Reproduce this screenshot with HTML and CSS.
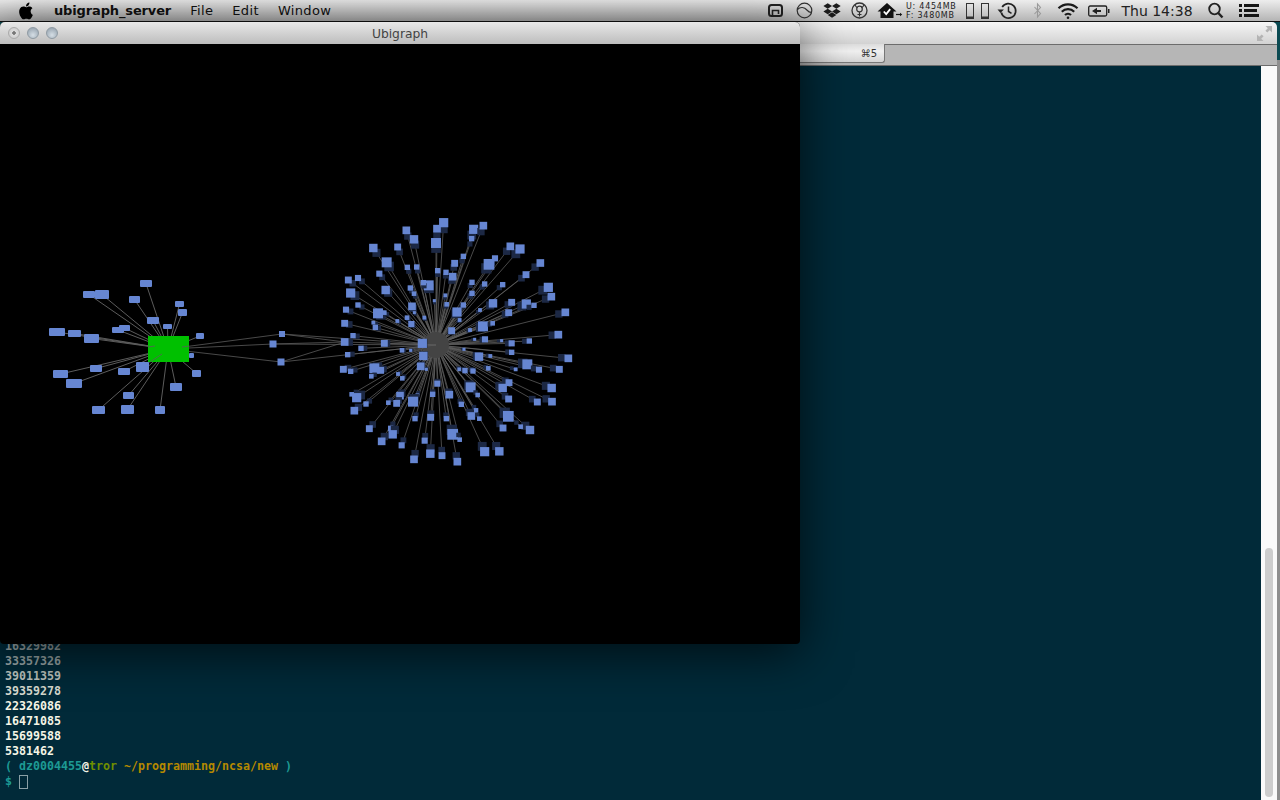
FILE: index.html
```html
<!DOCTYPE html>
<html lang="en">
<head>
    <meta charset="UTF-8">
    <title>Ubigraph</title>
    <link rel="stylesheet" href="styles.css">
</head>
<body>

    <!-- Menu bar -->
    <header class="menubar">
        <svg class="apple" width="17" height="18" viewBox="2 1 20 22"><path d="M17.05 12.54c-.03-2.6 2.13-3.85 2.22-3.91-1.21-1.77-3.09-2.01-3.76-2.04-1.6-.16-3.12.94-3.93.94-.81 0-2.06-.92-3.39-.89-1.74.03-3.35 1.01-4.25 2.57-1.81 3.14-.46 7.8 1.3 10.35.86 1.25 1.89 2.65 3.24 2.6 1.3-.05 1.79-.84 3.36-.84 1.57 0 2.01.84 3.39.81 1.4-.02 2.28-1.27 3.14-2.53.99-1.45 1.4-2.85 1.42-2.92-.03-.01-2.72-1.04-2.75-4.14zM14.47 4.9c.72-.87 1.2-2.08 1.07-3.28-1.03.04-2.28.69-3.02 1.55-.66.77-1.24 2-1.09 3.18 1.15.09 2.32-.58 3.04-1.45z"/></svg>
        <nav class="menus">
            <span class="app-name">ubigraph_server</span>
            <span>File</span>
            <span>Edit</span>
            <span>Window</span>
        </nav>

        <div class="status">
            <!-- remote -->
            <svg width="30" height="21" viewBox="0 0 30 21"><rect x="9" y="5" width="13" height="11" rx="2.5" fill="none" stroke="#222" stroke-width="2"/><path d="M12.5 16v-5.500h6V14" fill="none" stroke="#222" stroke-width="1.600"/></svg>
            <!-- circle with arc -->
            <svg width="30" height="21" viewBox="0 0 30 21"><circle cx="14.5" cy="10.5" r="7.3" fill="none" stroke="#333" stroke-width="1.2"/><path d="M7.4 9.5c3-3 7-2.500 9.500.5 1.500 1.700 3 2.500 4.500 2.400" fill="none" stroke="#333" stroke-width="1.2"/></svg>
            <!-- dropbox -->
            <svg width="25" height="21" viewBox="0 0 25 21"><path transform="translate(3.400 1.900) scale(.72)" fill="#1c1c1c" d="M6 1.800 0 5.600l6 3.800 6-3.800zM18 1.800l-6 3.800 6 3.800 6-3.800zM0 13.200l6 3.800 6-3.800-6-3.800zM18 9.400l-6 3.800 6 3.800 6-3.800zM6 18.300l6 3.800 6-3.800-6-3.800z"/></svg>
            <!-- ring -->
            <svg width="27" height="21" viewBox="0 0 27 21" fill="none" stroke="#333"><circle cx="14.500" cy="10.500" r="7.500" stroke-width="1.300"/><circle cx="14.500" cy="9" r="2.800" stroke-width="1.200"/><path d="M14.500 12v4.500M12.500 14.500h4M10 5c1 2 2 2.500 2.500 2.800M19 5c-1 2-2 2.500-2.500 2.800" stroke-width="1.100"/></svg>
            <!-- house with check -->
            <svg width="32" height="21" viewBox="0 0 32 21"><path d="M15 3 5.500 11.500h3V18h13v-6.500h3z" fill="#111"/><path d="M11.800 11.500l2.400 2.600 4-5" fill="none" stroke="#fff" stroke-width="1.800"/><path d="M24 14.500h5" stroke="#111" stroke-width="1.200"/><path d="M28 12.800l2.200 1.700-2.200 1.700z" fill="#111"/></svg>

            <div class="memory">
                <span>U: 4454MB</span>
                <span>F: 3480MB</span>
            </div>

            <!-- two meters -->
            <svg width="32" height="21" viewBox="0 0 32 21" fill="none" stroke="#333"><rect x="6.500" y="3.500" width="7" height="15"/><rect x="21.500" y="3.500" width="7" height="15"/><path d="M6.500 17.500h7M21.500 17.500h7" stroke-width="2"/></svg>
            <!-- time machine -->
            <svg width="32" height="21" viewBox="0 0 32 21" fill="none" stroke="#222"><path d="M10.200 7a7.300 7.300 0 1 1-.9 5.500" stroke-width="1.700"/><path d="M5.500 9.500l3 3.500 3.400-3.500z" fill="#222" stroke="none"/><path d="M16.500 6.500v5l3 1.800" stroke-width="1.500"/></svg>
            <!-- bluetooth -->
            <svg width="28" height="21" viewBox="0 0 28 21" fill="none" stroke="#999"><path d="M10.500 7l6 6.500-3 3.500V4l3 3.500-6 6.500" stroke-width="1.100"/></svg>
            <!-- wifi -->
            <svg width="32" height="21" viewBox="0 0 32 21" fill="none" stroke="#1a1a1a" stroke-width="2.200"><path d="M6.500 8.300a13.500 13.500 0 0 1 19 0"/><path d="M9.800 11.700a8.800 8.800 0 0 1 12.400 0"/><path d="M13 15a4.300 4.300 0 0 1 6 0"/><circle cx="16" cy="17.800" r="1.300" fill="#1a1a1a" stroke="none"/></svg>
            <!-- battery on power -->
            <svg width="30" height="21" viewBox="0 0 30 21"><rect x="4.700" y="6" width="18" height="10" rx="1.500" fill="none" stroke="#222" stroke-width="1.300"/><path d="M24 9h1.500v4H24" fill="#222"/><path d="M8 11l5-3.200V10h4v2h-4v2.200z" fill="#222"/></svg>

            <span class="clock">Thu 14:38</span>

            <!-- spotlight -->
            <svg width="30" height="21" viewBox="0 0 30 21" fill="none" stroke="#222"><circle cx="14.500" cy="9" r="5.300" stroke-width="1.800"/><path d="M18.300 13l4.200 4.500" stroke-width="2.400"/></svg>
            <!-- list -->
            <svg width="36" height="21" viewBox="0 0 36 21" fill="#151515"><rect x="9" y="4" width="3" height="3"/><rect x="14" y="4" width="15" height="3"/><rect x="9" y="9" width="3" height="3"/><rect x="14" y="9" width="13" height="3"/><rect x="9" y="14" width="3" height="3"/><rect x="14" y="14" width="15" height="3"/></svg>
        </div>
    </header>

    <!-- Terminal behind -->
    <section class="terminal">
        <div class="term-title">
            <svg class="expand" width="15" height="15" viewBox="0 0 15 15" fill="#b4b4b4"><path d="M0 15V8.500l2.300 2.300 2.400-2.400 1.900 1.900-2.400 2.400L6.500 15zM15 0v6.500l-2.300-2.300-2.400 2.400-1.900-1.900 2.400-2.400L8.500 0z"/></svg>
        </div>
        <div class="tab-bar">
            <div class="tab">
                <span>bash</span>
                <span class="tab-key">⌘5</span>
            </div>
        </div>
        <div class="term-main">
            <div class="term-output">
                <div class="fade-1">16329982</div>
                <div class="fade-1">33357326</div>
                <div class="fade-2">39011359</div>
                <div class="fade-3">39359278</div>
                <div>22326086</div>
                <div>16471085</div>
                <div>15699588</div>
                <div>5381462</div>
                <div><span class="teal">( dz0004455</span><span>@</span><span class="green">tror</span> <span class="yellow">~/programming/ncsa/new</span> <span class="teal">)</span></div>
                <div class="prompt"><span class="teal">$ </span><span class="cursor"></span></div>
            </div>
            <div class="scrollbar"><div class="thumb"></div></div>
        </div>
    </section>

    <!-- Ubigraph window -->
    <section class="ubigraph">
        <div class="ubi-title">
            <div class="lights">
                <span class="light first"></span>
                <span class="light"></span>
                <span class="light"></span>
            </div>
            <span>Ubigraph</span>
        </div>
        <svg id="graph" class="canvas" width="800" height="600" viewBox="0 44 800 600"></svg>
    </section>

    <script src="graph.js"></script>
</body>
</html>
```

FILE: styles.css
```css
/* General */
html, body {
    height: 100%;
}

body {
    margin: 0;
    width: 1280px;
    height: 800px;
    overflow: hidden;
    display: flex;
    flex-direction: column;
    position: relative;
    font-family: "DejaVu Sans", sans-serif;
    background: linear-gradient(#0b4a52 60px, #8e8e8e 60px);
}

/* Menu bar */
.menubar {
    height: 21px;
    flex: none;
    display: flex;
    align-items: center;
    padding: 0 14px 0 18px;
    background: linear-gradient(#ededed, #b4b4b4);
    border-bottom: 1px solid #111;
    color: #111;
    font-size: 13px;
}

.apple {
    margin-right: 19px;
    flex: none;
}

.menus {
    display: flex;
    gap: 19px;
}

.menus span {
    letter-spacing: .35px;
}

.menus .app-name {
    font-weight: bold;
    letter-spacing: -.14px;
}

.status {
    margin-left: auto;
    display: flex;
    align-items: center;
}

.memory {
    width: 54px;
    margin-left: 2px;
    display: flex;
    flex-direction: column;
    font-size: 8px;
    line-height: 9px;
    letter-spacing: .75px;
    color: #222;
}

.clock {
    width: 86px;
    text-align: center;
    font-size: 14px;
    color: #222;
}

/* Terminal */
.terminal {
    flex: 1;
    min-height: 0;
    width: 1277px;
    display: flex;
    flex-direction: column;
    border-radius: 5px 5px 0 0;
    overflow: hidden;
}

.term-title {
    height: 22px;
    flex: none;
    display: flex;
    justify-content: flex-end;
    align-items: center;
    padding-right: 5px;
    background: linear-gradient(#f6f6f6, #d2d2d2);
}

.tab-bar {
    height: 20px;
    flex: none;
    background: #b6b6b6;
    border-top: 1px solid #6c6c6c;
    border-bottom: 1px solid #6c6c6c;
}

.tab {
    width: 885px;
    height: 19px;
    margin-top: -1px;
    box-sizing: border-box;
    display: flex;
    align-items: center;
    padding-left: 776px;
    border-right: 1px solid #777;
    border-bottom: 1px solid #777;
    border-radius: 0 0 3px 0;
    background: linear-gradient(#dcdcdc, #f0f0f0 40%, #d4d4d4);
    color: #333;
    font-size: 10px;
}

.tab-key {
    margin-left: auto;
    margin-right: 7px;
}

.term-main {
    flex: 1;
    min-height: 0;
    display: flex;
    background: #012a39;
}

.term-output {
    flex: 1;
    display: flex;
    flex-direction: column;
    justify-content: flex-end;
    padding: 0 0 11px 5px;
    font-family: "DejaVu Sans Mono", monospace;
    font-size: 11.63px;
    font-weight: bold;
    line-height: 15px;
    color: #f5f5e6;
    white-space: pre;
}

.fade-1 { color: #9aa7a8; }
.fade-2 { color: #bcc4bf; }
.fade-3 { color: #d8dbd0; }

.teal { color: #1d9a94; }
.green { color: #6f8f00; }
.yellow { color: #b58900; }

.prompt {
    display: flex;
}

.cursor {
    width: 7px;
    height: 12px;
    margin-top: 1px;
    border: 1px solid #8aa0a6;
    box-sizing: content-box;
}

.scrollbar {
    width: 16px;
    flex: none;
    display: flex;
    align-items: flex-end;
    justify-content: center;
    padding-bottom: 3px;
    box-sizing: border-box;
    background: #fafafa;
}

.thumb {
    width: 8px;
    height: 249px;
    border-radius: 4px;
    background: #cdcdcd;
}

/* Ubigraph window */
.ubigraph {
    position: absolute;
    left: 0;
    top: 22px;
    width: 800px;
    height: 622px;
    border-radius: 5px 5px 4px 4px;
    overflow: hidden;
    box-shadow: 0 8px 50px rgba(0, 0, 0, 0.7);
    background: #000;
}

.ubi-title {
    height: 22px;
    display: flex;
    align-items: center;
    justify-content: center;
    padding-top: 1px;
    box-sizing: border-box;
    background: linear-gradient(#e8e8e8, #bdbdbd);
    color: #444;
    font-size: 12.3px;
}

.lights {
    position: absolute;
    left: 8px;
    top: 5px;
    display: flex;
    gap: 7px;
}

.light {
    width: 12px;
    height: 12px;
    box-sizing: border-box;
    border-radius: 50%;
    border: 1px solid #8f9aa3;
    background: radial-gradient(circle at 50% 70%, #d5dee5, #8d9ba7);
}

.first {
    border-color: #aaa;
    background: radial-gradient(circle, #777 0, #777 1.5px, #ddd 2px, #c4c4c4);
}

.canvas {
    display: block;
}

.expand {
    flex: none;
}
```

FILE: graph.js
```js
// Graph drawn from data: positions are read off a 3x grid
const SVG = 'http://www.w3.org/2000/svg';
const graph = document.getElementById('graph');

const HUB = [436, 345];
const GREEN = [168, 349];

// upper half of the big star: x, y, size on the 3x grid, origin (330, 210)
const upper = [
    [341,38,24],[321,56,20],[229,61,20],[252,88,22],[431,58,24],[460,47,20],[425,86,14],[318,99,26],
    [130,114,22],[203,111,18],[170,157,26],[400,139,14],[570,117,24],[541,109,20],[495,145,16],[477,163,28],
    [374,160,18],[260,171,14],[232,172,14],[148,191,16],[631,159,20],[588,194,18],[323,182,14],[368,200,20],
    [348,187,14],[55,210,18],[84,204,16],[296,226,26],[280,218,14],[426,217,14],[464,222,14],[518,224,14],
    [655,232,24],[664,260,20],[241,234,14],[62,249,24],[167,240,22],[252,251,12],[426,250,14],[346,256,10],
    [489,280,22],[545,277,18],[589,282,24],[612,286,14],[350,283,12],[400,285,14],[313,272,8],[48,299,16],
    [84,285,14],[246,289,20],[144,310,26],[163,308,12],[450,300,10],[536,308,18],[706,307,20],[381,306,24],
    [231,323,12],[253,308,8],[283,323,10],[202,333,10],[389,330,10],[44,340,18],[130,338,10],[136,352,14],
    [244,342,16],[459,349,26],[488,340,12],[365,362,18],[420,360,10],[69,377,14],[685,374,20],[598,393,14],
    [44,396,20],[163,400,18],[277,400,24],[465,388,16],[434,388,8],[515,392,8],[545,400,16]
];

// lower half: same grid, origin (330, 340)
const lower = [
    [93,25,14],[53,44,14],[216,31,12],[242,31,8],[280,48,22],[402,28,8],[545,37,14],[447,50,22],
    [481,48,10],[715,55,20],[592,73,26],[272,79,20],[40,88,18],[62,94,14],[133,85,26],[152,91,18],
    [124,109,12],[204,102,10],[217,115,12],[289,88,8],[388,88,10],[405,92,14],[429,93,14],[475,85,12],
    [557,88,10],[627,89,16],[688,88,18],[422,142,26],[537,128,18],[518,144,22],[665,144,22],[322,131,16],
    [65,163,12],[80,173,24],[108,192,14],[210,167,20],[262,166,10],[308,163,14],[358,164,20],[443,165,12],
    [536,177,18],[394,193,14],[622,186,18],[666,185,20],[175,188,12],[200,190,18],[249,185,26],[73,212,20],
    [438,211,12],[424,228,20],[448,236,12],[535,229,28],[255,236,14],[302,232,18],[349,236,14],[118,266,18],
    [182,265,14],[188,283,22],[519,264,18],[600,270,22],[572,260,12],[368,283,28],[389,299,12],[284,302,16],
    [155,304,20],[215,316,16],[301,341,22],[336,347,18],[252,358,20],[382,365,20],[464,335,24],[508,334,22]
];

// small cluster around the green node: x, y, w, h
const cluster = [
    [140,280,12,7],[83,291,12,7],[95,290,14,9],[129,296,11,7],[175,301,9,6],[178,309,9,7],[147,317,12,7],
    [163,324,9,5],[112,327,12,6],[119,325,11,6],[49,328,16,8],[68,330,13,7],[84,334,15,9],[196,333,8,6],
    [53,370,15,8],[66,379,16,9],[90,365,12,7],[118,368,12,7],[136,362,13,10],[192,370,9,7],[170,383,12,8],
    [123,392,11,7],[92,406,13,8],[121,405,13,9],[155,406,10,8],[189,353,5,5]
];

const bridges = [[282, 334, 6], [273, 344, 7], [281, 362, 7]];

function add(tag, attrs) {
    const el = document.createElementNS(SVG, tag);
    for (const key in attrs) el.setAttribute(key, attrs[key]);
    graph.appendChild(el);
    return el;
}

function line(from, to, width) {
    add('line', { x1: from[0], y1: from[1], x2: to[0], y2: to[1], stroke: '#5c5c5c', 'stroke-width': width || 0.8 });
}

const star = upper.map(n => [330 + n[0] / 3, 210 + n[1] / 3, n[2] / 3])
    .concat(lower.map(n => [330 + n[0] / 3, 340 + n[1] / 3, n[2] / 3]));

// edges first, nodes sit on top
star.forEach(n => line(HUB, n));
add('circle', { cx: HUB[0], cy: HUB[1], r: 13, fill: '#444444' });
cluster.forEach(n => line(GREEN, [n[0] + n[2] / 2, n[1] + n[3] / 2], 1));
bridges.forEach(n => {
    line(GREEN, n);
    line(n, [345, 342]);
    line(n, HUB);
});

star.forEach(n => {
    const [x, y] = n;
    const s = n[2] * 1.15;
    const backX = x + (HUB[0] - x) * 0.05;
    const backY = y + (HUB[1] - y) * 0.05;
    add('rect', { x: backX - s * 0.48, y: backY - s * 0.48, width: s * 0.96, height: s * 0.96, fill: '#1c2844' });
    add('rect', { x: x - s / 2, y: y - s / 2, width: s, height: s, fill: '#6686d2' });
});

cluster.forEach(n => {
    add('rect', { x: n[0], y: n[1], width: n[2], height: n[3], rx: 1, fill: '#6686d2' });
});

bridges.forEach(n => {
    add('rect', { x: n[0] - n[2] / 2, y: n[1] - n[2] / 2, width: n[2], height: n[2], fill: '#6686d2' });
});

// green node with a few edges running over it
add('rect', { x: 148, y: 336, width: 41, height: 26, fill: '#00c000' });
line([148, 347], [155, 346]);
line([162, 354], [150, 362]);
line([182, 347], [189, 346]);
```
